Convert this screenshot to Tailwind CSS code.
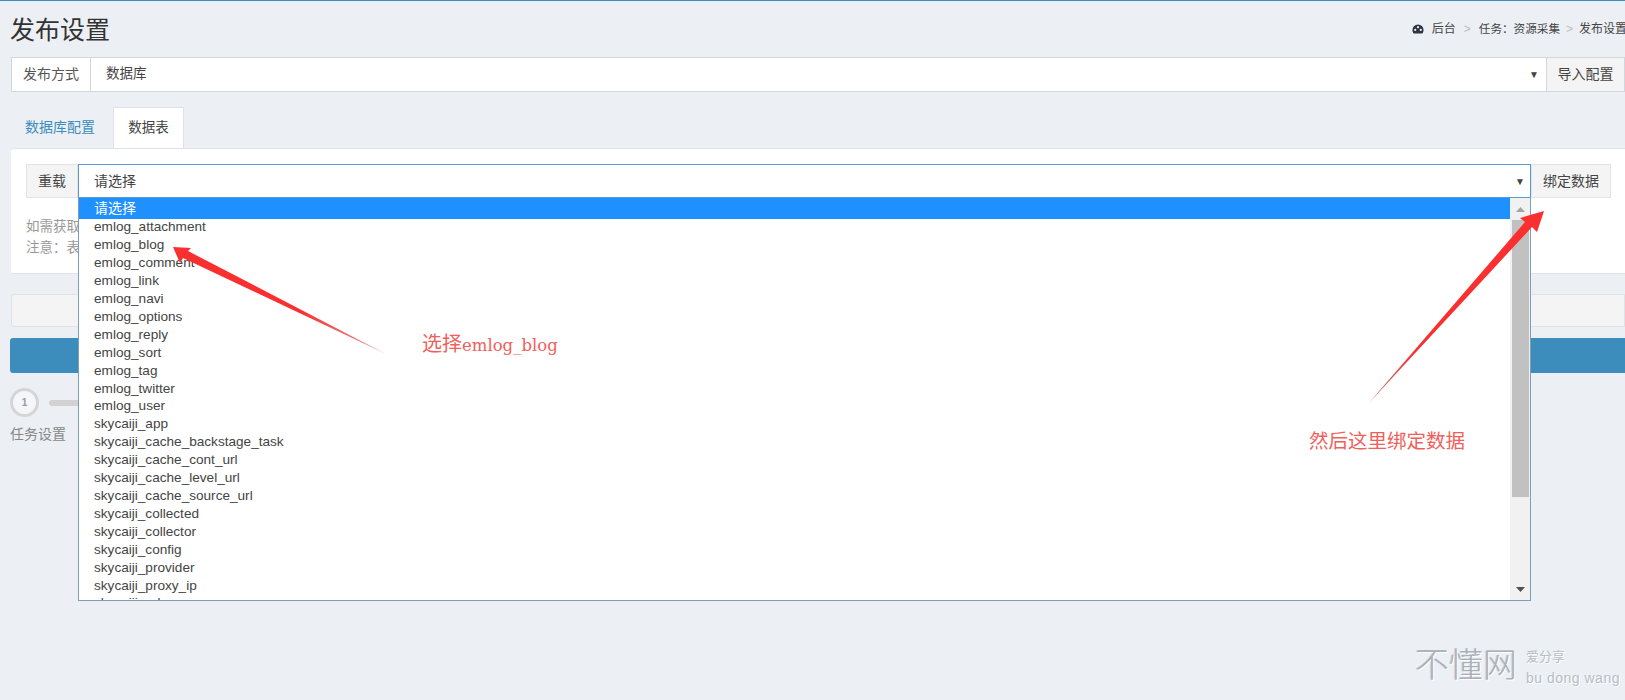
<!DOCTYPE html>
<html lang="zh">
<head>
<meta charset="utf-8">
<script src="https://cdn.jsdelivr.net/npm/@tailwindcss/browser@4"></script>
</head>
<body class="relative h-[700px] w-[1625px] overflow-hidden bg-[#ecf0f5] font-['Liberation_Sans','Noto_Sans_CJK_SC',sans-serif] text-[14px] text-[#555]">
  <div class="h-px bg-[#3c8dbc]"></div>

  <!-- header -->
  <div class="flex h-[56px] items-start justify-between pl-[10px] pt-[12px]">
    <h1 class="text-[25px] leading-[35px] text-[#333]">发布设置</h1>
    <div class="flex items-center pt-[6px] text-[12px] leading-[20px] text-[#444]">
      <svg class="mr-[8px] h-[12px] w-[12px]" viewBox="0 0 13 12" fill="#2f3542"><path d="M6.500 1a6 6 0 0 0-6 6c0 1.600.5 3 1.500 4h9c1-1 1.500-2.400 1.500-4a6 6 0 0 0-6-6z"/><circle cx="3.500" cy="7" r="1.200" fill="#ecf0f5"/><circle cx="6.500" cy="4" r="1.200" fill="#ecf0f5"/><circle cx="9.500" cy="7" r="1.200" fill="#ecf0f5"/></svg>
      <span>后台</span><span class="mx-[8px] text-[#bbb]">&gt;</span><span class="text-[11.600px]">任务：资源采集</span><span class="mx-[6px] text-[#bbb]">&gt;</span><span class="w-[46px] whitespace-nowrap">发布设置</span>
    </div>
  </div>

  <!-- publish method -->
  <div class="ml-[11px] flex h-[35px] border border-[#d2d6de] bg-white">
    <div class="flex w-[79px] items-center justify-center border-r border-[#d2d6de]">发布方式</div>
    <div class="flex flex-1 items-center justify-between pl-[15px] pr-[7px] text-[13px] text-[#444]"><span class="text-[13.500px]">数据库</span><span class="text-[10px]">▼</span></div>
    <div class="flex w-[78px] items-center justify-center border-l border-[#d2d6de] bg-[#f4f4f4] text-[#444]">导入配置</div>
  </div>

  <!-- tabs -->
  <div class="ml-[11px] mt-[15px] flex h-[41px] items-stretch">
    <div class="flex w-[102px] items-center justify-center pr-[4px] text-[#3c8dbc]">数据库配置</div>
    <div class="flex w-[71px] items-center justify-center border border-b-0 border-[#dfe3e8] bg-white text-[13.500px] text-[#444]">数据表</div>
  </div>

  <!-- table panel -->
  <div class="ml-[11px] h-[126px] rounded-l-[3px] border-y border-[#dfe3e8] bg-white pl-[15px] pt-[15px]">
    <div class="flex h-[34px] items-stretch">
      <div class="flex w-[52px] items-center justify-center border border-[#e3e3e3] bg-[#f4f4f4] text-[#444]">重载</div>
      <div class="flex w-[1453px] items-center justify-between border border-[#5b9bd5] pl-[15px] pr-[5px] pt-[1px] text-[#444]"><span>请选择</span><span class="text-[10px]">▼</span></div>
      <div class="flex w-[80px] items-center justify-center border border-[#e3e3e3] bg-[#f4f4f4] text-[#444]">绑定数据</div>
    </div>
    <div class="mt-[19px] text-[13.500px] leading-[20.500px] text-[#999]">
      <p>如需获取</p>
      <p>注意：表</p>
    </div>
  </div>

  <!-- bars -->
  <div class="ml-[11px] mt-[20px] h-[33px] rounded-l-[3px] border border-[#dfe3e8] bg-[#f4f4f4]"></div>
  <div class="ml-[10px] mt-[11px] h-[35px] rounded-l-[3px] bg-[#3c8dbc]"></div>

  <!-- steps -->
  <div class="ml-[10px] mt-[15px] flex h-[29px] items-center">
    <div class="flex h-[29px] w-[29px] items-center justify-center rounded-full border-[3px] border-[#d5d5d5] bg-[#f4f6f9] text-[10px] font-bold text-[#999]">1</div>
    <div class="ml-[10px] h-[6px] w-[40px] rounded-l-full bg-[#d2d2d2]"></div>
  </div>
  <div class="ml-[10px] mt-[7px] leading-[20px] text-[#888]">任务设置</div>

  <!-- open select dropdown -->
  <div class="absolute left-[78px] top-[197px] flex h-[404px] w-[1453px] overflow-hidden border border-[#7f9db9] border-t-[#5b9bd5] bg-white text-[13.600px] leading-[17.900px] text-[#444]">
    <div class="min-w-0 flex-1">
      <div class="flex h-[21px] items-center bg-[#1e90ff] pl-[15px] text-[14px] text-white">请选择</div>
      <div class="-mt-[0.600px] pl-[15px] font-['Liberation_Sans',sans-serif]">
        <div>emlog_attachment</div>
        <div>emlog_blog</div>
        <div>emlog_comment</div>
        <div>emlog_link</div>
        <div>emlog_navi</div>
        <div>emlog_options</div>
        <div>emlog_reply</div>
        <div>emlog_sort</div>
        <div>emlog_tag</div>
        <div>emlog_twitter</div>
        <div>emlog_user</div>
        <div>skycaiji_app</div>
        <div>skycaiji_cache_backstage_task</div>
        <div>skycaiji_cache_cont_url</div>
        <div>skycaiji_cache_level_url</div>
        <div>skycaiji_cache_source_url</div>
        <div>skycaiji_collected</div>
        <div>skycaiji_collector</div>
        <div>skycaiji_config</div>
        <div>skycaiji_provider</div>
        <div>skycaiji_proxy_ip</div>
        <div>skycaiji_release</div>
      </div>
    </div>
    <div class="flex w-[20px] flex-col bg-[#f1f1f1]">
      <div class="flex h-[22px] items-center justify-center"><svg class="h-[5px] w-[9px]" viewBox="0 0 9 5" fill="#a3a3a3"><path d="M4.500 0 9 5H0z"/></svg></div>
      <div class="mx-auto h-[277px] w-[17px] bg-[#c1c1c1]"></div>
      <div class="flex flex-1 items-end justify-center pb-[8px]"><svg class="h-[5px] w-[9px]" viewBox="0 0 9 5" fill="#505050"><path d="M0 0h9L4.500 5z"/></svg></div>
    </div>
  </div>

  <!-- annotation arrows -->
  <svg class="absolute left-0 top-0 h-[700px] w-[1625px]" viewBox="0 0 1625 700" fill="none">
    <defs>
      <linearGradient id="tailA" gradientUnits="userSpaceOnUse" x1="172" y1="247" x2="386" y2="354"><stop offset="0.600" stop-color="#fa2f2f"/><stop offset="1" stop-color="#d9a0a0"/></linearGradient>
      <linearGradient id="tailB" gradientUnits="userSpaceOnUse" x1="1544" y1="211" x2="1368" y2="404"><stop offset="0.700" stop-color="#fa2f2f"/><stop offset="1" stop-color="#c07070"/></linearGradient>
    </defs>
    <path d="M173 247 191 248 188 251 386 354 183 258 180 263Z" fill="url(#tailA)"/>
    <path d="M1544 211 1537 232 1532 227 1368 404 1525 222 1520 218Z" fill="url(#tailB)"/>
  </svg>

  <!-- annotation labels -->
  <div class="absolute left-[422px] top-[332px] whitespace-nowrap text-[20px] leading-[24px] text-[#f0605a]">选择<span class="font-['DejaVu_Serif',serif] text-[16.500px]">emlog_blog</span></div>
  <div class="absolute left-[1309px] top-[428px] whitespace-nowrap text-[19.500px] leading-[26px] text-[#f0605a]">然后这里绑定数据</div>

  <!-- watermark -->
  <div class="absolute left-[1415px] top-[644px] flex items-start gap-[9px] text-[#b8bdc3] [text-shadow:1px_1px_0_#fff]">
    <div class="whitespace-nowrap text-[34px] font-light leading-[42px] text-[#aab0b6] [text-shadow:1px_1px_0_#fff,-1px_0_0_#d0d4d9]">不懂网</div>
    <div class="pt-[5px]">
      <div class="text-[13px] leading-[16px]">爱分享</div>
      <div class="mt-[5px] whitespace-nowrap font-['Liberation_Sans',sans-serif] text-[14px] leading-[16px] tracking-[0.500px]">bu dong wang</div>
    </div>
  </div>
</body>
</html>
